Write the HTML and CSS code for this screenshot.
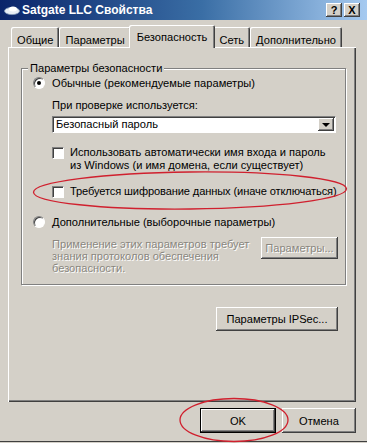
FILE: index.html
```html
<!DOCTYPE html>
<html lang="ru">
<head>
<meta charset="utf-8">
<title>Satgate LLC Свойства</title>
<link rel="stylesheet" href="styles.css">
</head>
<body>
<div class="window">
  <div class="titlebar">
    <svg class="appicon" width="16" height="12" viewBox="0 0 16 12">
      <ellipse cx="8" cy="7" rx="7.5" ry="3.6" fill="#e8eef5" stroke="#8aa0bc" stroke-width="0.8"/>
      <ellipse cx="9" cy="5" rx="4" ry="2.5" fill="#ffffff"/>
    </svg>
    <span class="title">Satgate LLC Свойства</span>
    <div class="tbtns">
      <span class="tbtn">?</span>
      <span class="tbtn">X</span>
    </div>
  </div>

  <div class="tabs">
    <div class="tab">Общие</div>
    <div class="tab">Параметры</div>
    <div class="tab active">Безопасность</div>
    <div class="tab">Сеть</div>
    <div class="tab">Дополнительно</div>
  </div>

  <div class="panel">
    <div class="group">
      <div class="legend">Параметры безопасности</div>
      <div class="row radio-row first">
        <span class="radio checked"></span>
        <span>Обычные (рекомендуемые параметры)</span>
      </div>
      <div class="sub label">При проверке используется:</div>
      <div class="sub select">
        <span class="select-text">Безопасный пароль</span>
        <span class="drop"><span class="tri"></span></span>
      </div>
      <div class="sub check-row cb1">
        <span class="checkbox"></span>
        <span class="check-text">Использовать автоматически имя входа и пароль<br>из Windows (и имя домена, если существует)</span>
      </div>
      <div class="sub check-row cb2">
        <span class="checkbox"></span>
        <span class="check-text">Требуется шифрование данных (иначе отключаться)</span>
      </div>
      <div class="row radio-row second">
        <span class="radio"></span>
        <span>Дополнительные (выборочные параметры)</span>
      </div>
      <div class="sub adv">
        <div class="disabled-text">Применение этих параметров требует<br>знания протоколов обеспечения<br>безопасности.</div>
        <span class="btn disabled params">Параметры...</span>
      </div>
    </div>
    <div class="ipsec-row">
      <span class="btn ipsec">Параметры IPSec...</span>
    </div>
  </div>

  <div class="footer">
    <span class="btn ok default">OK</span>
    <span class="btn cancel">Отмена</span>
  </div>

  <svg class="marks" width="367" height="443" viewBox="0 0 367 443">
    <ellipse cx="190" cy="190.5" rx="156.5" ry="18.5" fill="none" stroke="#d0202e" stroke-width="1.3" transform="rotate(-0.6 190 190.5)"/>
    <ellipse cx="234" cy="420" rx="54" ry="21.5" fill="none" stroke="#d0202e" stroke-width="1.3"/>
  </svg>
</div>
</body>
</html>
```

FILE: styles.css
```css
* { box-sizing: border-box; }
html, body { margin: 0; padding: 0; }
body {
  width: 367px;
  height: 443px;
  overflow: hidden;
  background: #d4d0c8;
  font-family: "Liberation Sans", Arial, sans-serif;
  font-size: 11.1px;
  color: #000;
}
.window {
  position: relative;
  height: 442px;
  border-bottom: 1px solid #404040;
}

/* title bar */
.titlebar {
  height: 20px;
  display: flex;
  align-items: center;
  padding: 0 7px 0 4px;
  background: linear-gradient(to right, #0a246a 0%, #3a6ea5 55%, #a6caf0 100%);
  color: #fff;
}
.appicon { flex: none; margin-right: 2px; }
.title { font-weight: bold; font-size: 12px; flex: 1; }
.tbtns { display: flex; gap: 2px; }
.tbtn {
  width: 16px;
  height: 14px;
  background: #d4d0c8;
  color: #000;
  font-weight: bold;
  font-size: 11px;
  line-height: 14px;
  text-align: center;
  box-shadow: inset -1px -1px #404040, inset 1px 1px #fff, inset -2px -2px #808080;
}

/* tabs */
.tabs {
  display: flex;
  align-items: flex-end;
  height: 22px;
  margin-top: 5px;
  padding-left: 11px;
  position: relative;
  z-index: 2;
}
.tab {
  height: 20px;
  padding: 6px 6px 0 6px;
  line-height: 14px;
  white-space: nowrap;
  border-radius: 2px 2px 0 0;
  box-shadow: inset 1px 1px #fff, inset -1px 0 #404040, inset -2px 0 #808080;
  background: #d4d0c8;
}
.tab.active {
  height: 23px;
  margin: 0 -2px -1px -2px;
  padding: 5px 8px 0 8px;
  position: relative;
  z-index: 3;
}

/* panel */
.panel {
  position: relative;
  z-index: 1;
  margin: 0 11px 0 8px;
  height: 355px;
  padding: 21px 10px 0 13px;
  box-shadow: inset 1px 1px #fff, inset -1px -1px #404040, inset -2px -2px #808080;
}
.group {
  height: 217px;
  border: 1px solid #808080;
  box-shadow: inset 1px 1px #fff, 1px 1px #fff;
}
.legend {
  width: max-content;
  margin: -8px 0 0 6px;
  padding: 0 2px;
  line-height: 14px;
  background: #d4d0c8;
}
.row, .sub { line-height: 14px; }
.radio-row { display: flex; align-items: center; }
.radio-row.first { margin-top: 1px; }
.radio-row.second { margin-top: 17px; }
.radio {
  flex: none;
  position: relative;
  width: 12px;
  height: 12px;
  margin: 0 7px 0 11px;
  border-radius: 50%;
  background: #fff;
  border: 1px solid;
  border-color: #808080 #fff #fff #808080;
  box-shadow: inset 1px 1px #404040;
}
.radio.checked::after {
  content: "";
  position: absolute;
  left: 3px;
  top: 3px;
  width: 4px;
  height: 4px;
  border-radius: 50%;
  background: #000;
}
.sub { margin-left: 30px; }
.label { margin-top: 8px; }
.select {
  margin-top: 4px;
  width: 284px;
  height: 17px;
  display: flex;
  align-items: center;
  justify-content: space-between;
  background: #fff;
  border: 1px solid;
  border-color: #808080 #fff #fff #808080;
  box-shadow: inset 1px 1px #404040;
  padding: 1px 1px 1px 3px;
}
.select-text { line-height: 13px; }
.drop {
  width: 16px;
  height: 13px;
  display: flex;
  align-items: center;
  justify-content: center;
  background: #d4d0c8;
  box-shadow: inset -1px -1px #404040, inset 1px 1px #fff, inset -2px -2px #808080;
}
.tri {
  width: 0;
  height: 0;
  border-left: 4px solid transparent;
  border-right: 4px solid transparent;
  border-top: 4px solid #000;
}
.check-row { display: flex; align-items: flex-start; }
.check-text { line-height: 13px; white-space: nowrap; }
.cb1 { margin-top: 13px; }
.cb2 { margin-top: 13px; align-items: center; }
.cb2 .check-text { letter-spacing: -0.12px; }
.checkbox {
  flex: none;
  width: 12px;
  height: 12px;
  margin-right: 6px;
  background: #fff;
  border: 1px solid;
  border-color: #808080 #fff #fff #808080;
  box-shadow: inset 1px 1px #404040;
}
.cb1 .checkbox { margin-top: 1px; }
.adv {
  margin-top: 9px;
  margin-right: 7px;
  display: flex;
  justify-content: space-between;
  align-items: flex-start;
}
.disabled-text {
  line-height: 12px;
  white-space: nowrap;
  color: #8a877f;
  text-shadow: 1px 1px #fff;
}

/* buttons */
.btn {
  display: flex;
  align-items: center;
  justify-content: center;
  background: #d4d0c8;
  box-shadow: inset -1px -1px #404040, inset 1px 1px #fff, inset -2px -2px #808080;
  white-space: nowrap;
}
.btn.disabled { color: #8a877f; text-shadow: 1px 1px #fff; }
.params { flex: none; width: 77px; height: 22px; margin-top: -1px; }
.ipsec-row {
  display: flex;
  justify-content: flex-end;
  margin-top: 22px;
  padding-right: 8px;
}
.ipsec { width: 122px; height: 24px; }
.footer {
  display: flex;
  justify-content: flex-end;
  gap: 6px;
  margin-top: 6px;
  padding-right: 11px;
}
.ok { width: 76px; height: 25px; }
.cancel { width: 74px; height: 25px; }
.btn.default {
  border: 1px solid #000;
  box-shadow: inset -1px -1px #404040, inset 1px 1px #fff, inset -2px -2px #808080;
}

.marks {
  position: absolute;
  left: 0;
  top: 0;
  z-index: 5;
  pointer-events: none;
}
```
